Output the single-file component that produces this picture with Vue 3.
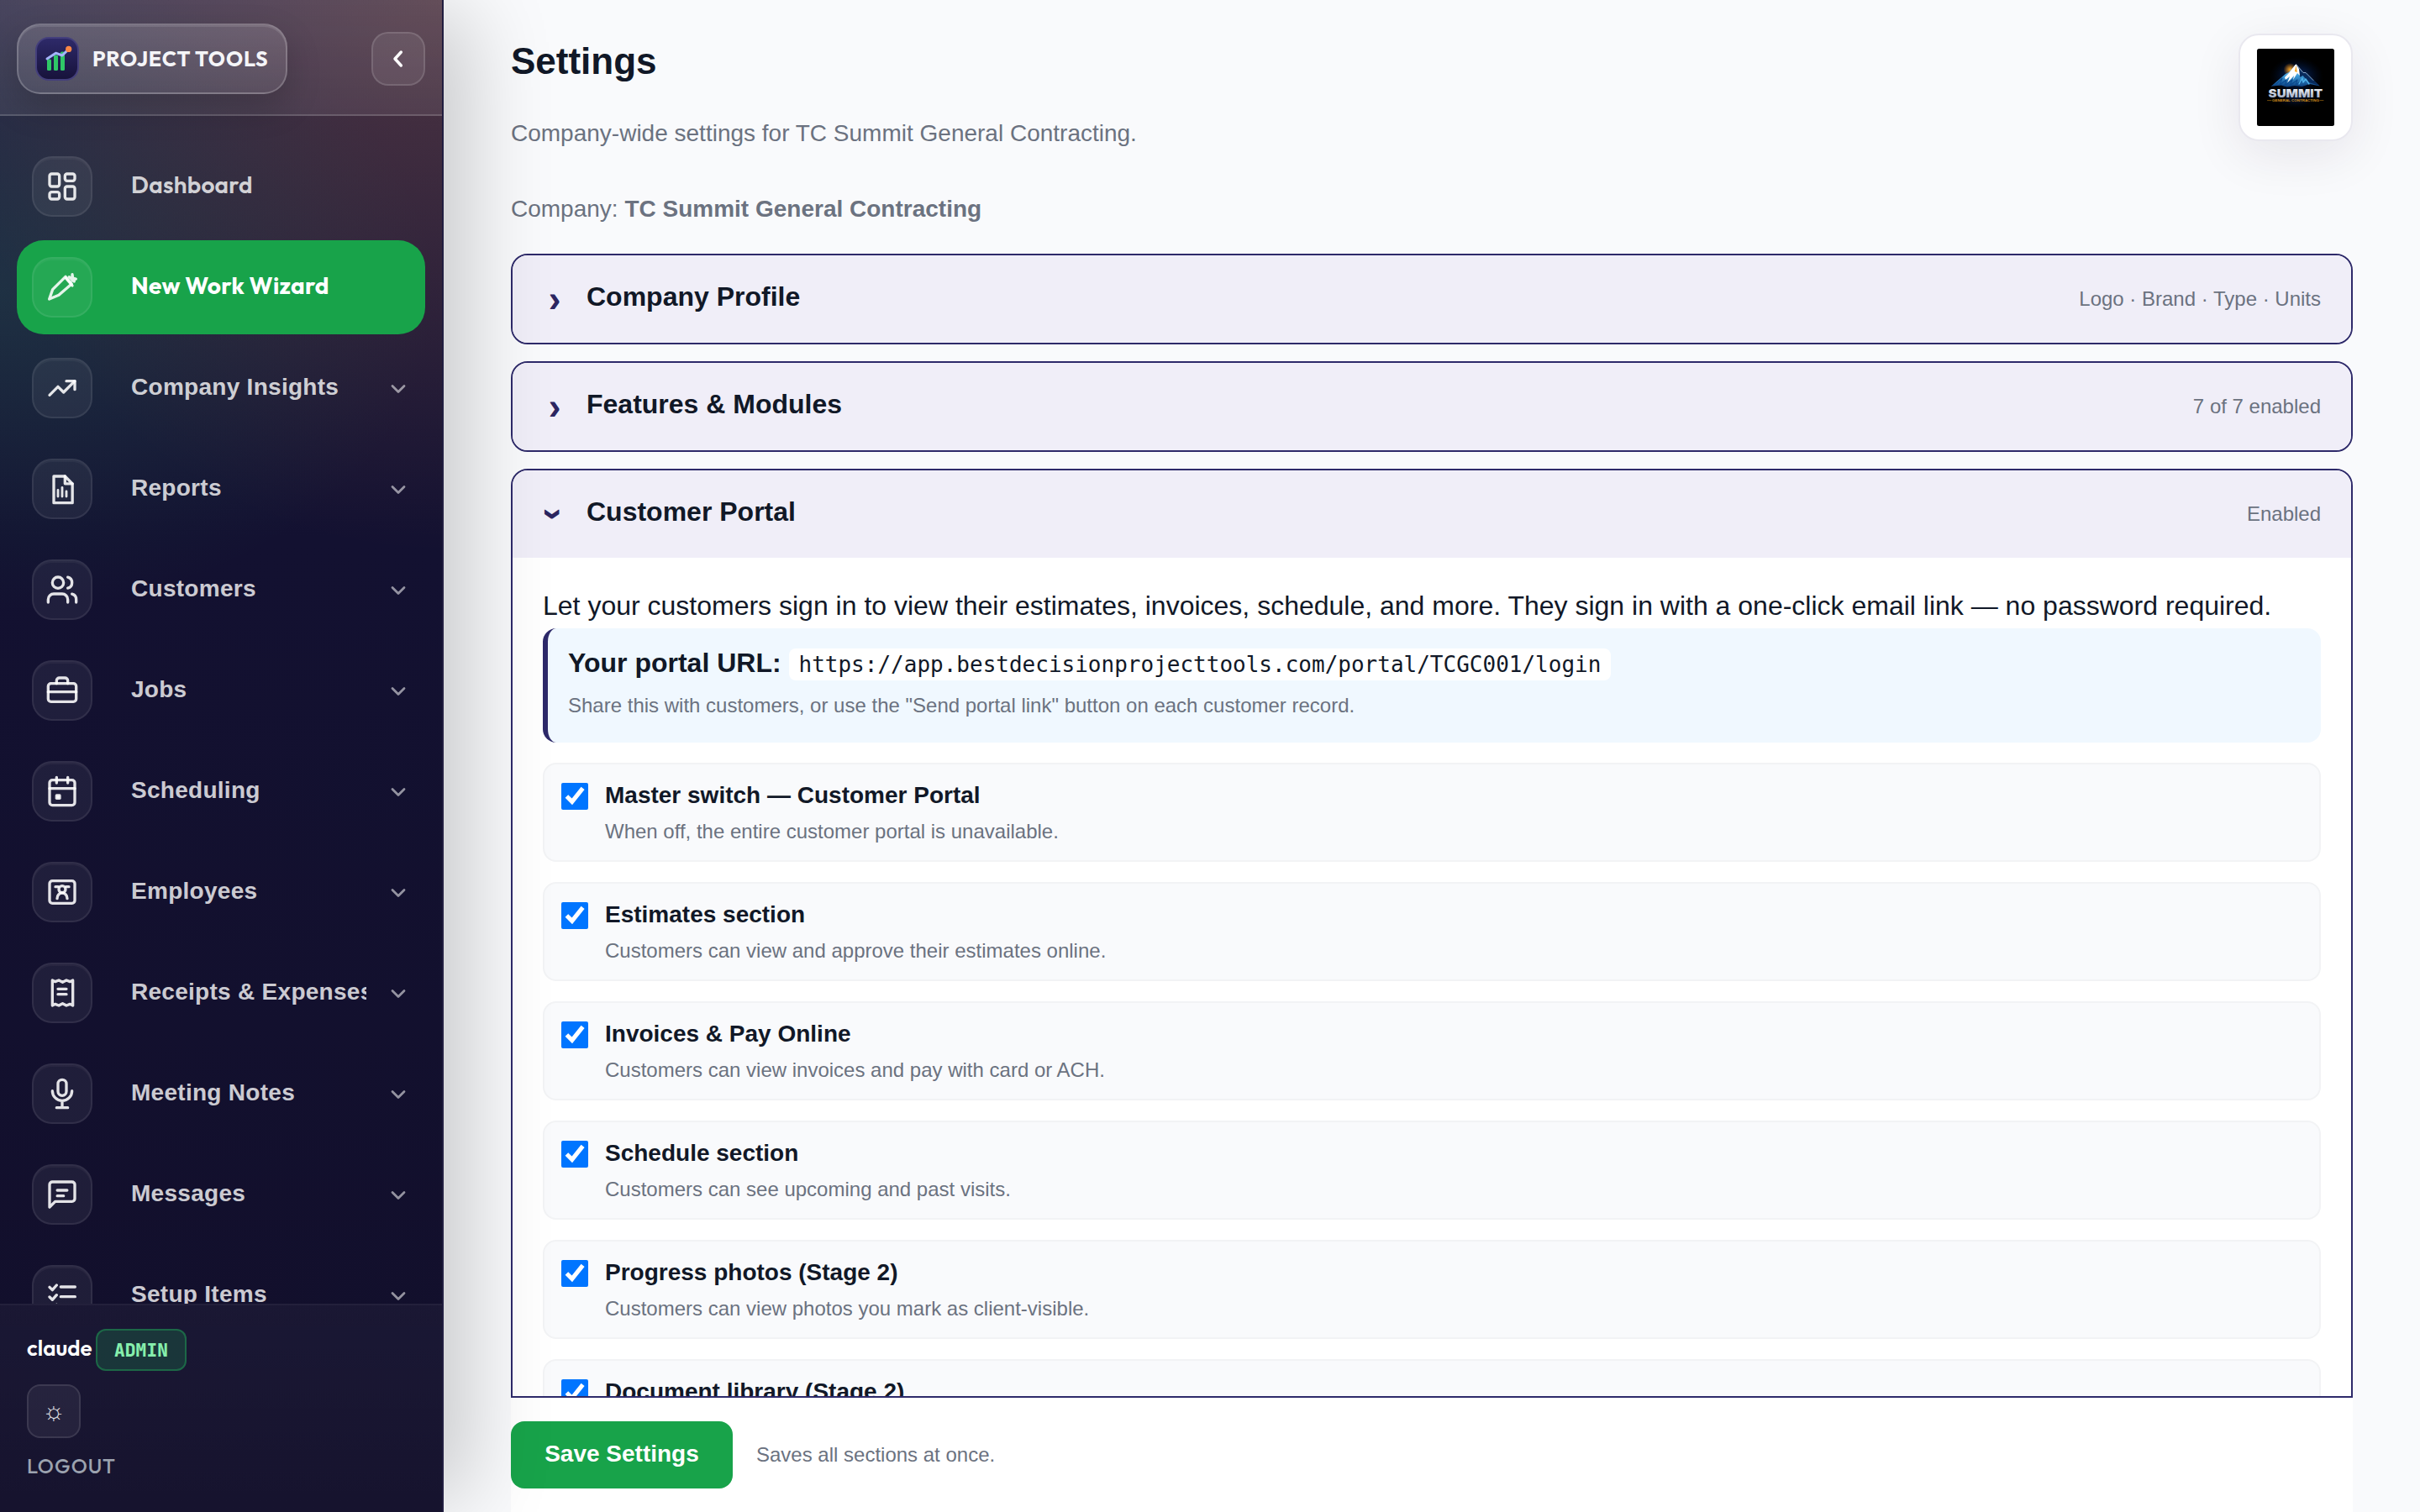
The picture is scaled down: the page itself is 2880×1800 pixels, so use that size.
<script setup>
import { ref } from "vue";

const navItems = [
	{
		label: "Dashboard",
		brand: true,
		icon: '<rect x="3" y="3" width="7" height="9" rx="1.5"/><rect x="14" y="3" width="7" height="5" rx="1.5"/><rect x="14" y="12" width="7" height="9" rx="1.5"/><rect x="3" y="16" width="7" height="5" rx="1.5"/>',
	},
	{
		label: "New Work Wizard",
		brand: true,
		active: true,
		icon: '<path d="M2.8 20.4 5.2 13.6 14.4 4.4l4.4 5.2-9.2 8-6.8 2.8z"/><path d="m14.6 5.4 4.6 5.4"/><path d="m17 4.6 3.6 3.2M19.2 2.8l.4 2.6 2.2.6-2.6 1.2z"/>',
	},
	{
		label: "Company Insights",
		icon: '<path d="m3 17 6-6 4 4 8-8"/><path d="M15 7h6v6"/>',
	},
	{
		label: "Reports",
		icon: '<path d="M6 3h8l5.3 5.3V22H6z"/><path d="M14 3v5.3h5.3"/><path d="M9 12.8v4.6M12 11v6.4M15 13.8v3.6" stroke-width="1.7"/>',
	},
	{
		label: "Customers",
		icon: '<path d="M16 21v-2a4 4 0 0 0-4-4H6a4 4 0 0 0-4 4v2"/><circle cx="9" cy="7" r="4"/><path d="M22 21v-2a4 4 0 0 0-3-3.87"/><path d="M16 3.13a4 4 0 0 1 0 7.75"/>',
	},
	{
		label: "Jobs",
		icon: '<rect x="2" y="7" width="20" height="13" rx="2"/><path d="M8 7V5a2 2 0 0 1 2-2h4a2 2 0 0 1 2 2v2"/><path d="M2 13h20"/>',
	},
	{
		label: "Scheduling",
		icon: '<rect x="3" y="4" width="18" height="18" rx="2"/><path d="M8 2v4M16 2v4M3 10h18"/><rect x="8" y="15" width="2.2" height="2" fill="currentColor"/>',
	},
	{
		label: "Employees",
		icon: '<rect x="3" y="4" width="18" height="16" rx="2"/><circle cx="12" cy="10" r="2.4"/><path d="M8.4 16.6c0-2.2 1.6-4 3.6-4s3.6 1.8 3.6 4"/><path d="M7.2 8.2h2M14.8 8.2h2"/>',
	},
	{
		label: "Receipts & Expenses",
		icon: '<path d="M5 3v18l2-1 2.6 1L12.3 19.6 15 21l2.6-1 2 1V3l-2 1L15 3l-2.7 1.4L9.6 3 7 4z"/><path d="M9 9.2h6M9 13h6"/>',
	},
	{
		label: "Meeting Notes",
		icon: '<rect x="9" y="2" width="6" height="11.4" rx="3"/><path d="M5 10a7 7 0 0 0 14 0M12 17v5M8 22h8"/>',
	},
	{
		label: "Messages",
		icon: '<path d="M21 15a2 2 0 0 1-2 2H7l-4 4V5a2 2 0 0 1 2-2h14a2 2 0 0 1 2 2z"/><path d="M8.5 9h7M8.5 13h4.5"/>',
	},
	{
		label: "Setup Items",
		icon: '<path d="m3 6.2 2 2 3-3.4M3 13.2l2 2 3-3.4M3 20.2l2 2 3-3.4"/><path d="M11 6h10.2M11 13h10.2M11 20h10.2"/>',
	},
];

const portalUrl = "https://app.bestdecisionprojecttools.com/portal/TCGC001/login";

const toggles = ref([
	{ title: "Master switch — Customer Portal", note: "When off, the entire customer portal is unavailable.", on: true },
	{ title: "Estimates section", note: "Customers can view and approve their estimates online.", on: true },
	{ title: "Invoices & Pay Online", note: "Customers can view invoices and pay with card or ACH.", on: true },
	{ title: "Schedule section", note: "Customers can see upcoming and past visits.", on: true },
	{ title: "Progress photos (Stage 2)", note: "Customers can view photos you mark as client-visible.", on: true },
	{ title: "Document library (Stage 2)", note: "", on: true },
]);
</script>

<template>
	<div class="app">
		<aside class="sidebar">
			<header class="sidebar-head">
				<div class="brand">
					<svg class="brand-icon" viewBox="0 0 52 52">
						<defs>
							<linearGradient id="brandBg" x1="0" y1="0" x2="0" y2="1">
								<stop offset="0" stop-color="#2e2a6a" />
								<stop offset="1" stop-color="#17123a" />
							</linearGradient>
						</defs>
						<rect x="1" y="1" width="50" height="50" rx="15" fill="url(#brandBg)" stroke="#443f7c" stroke-width="2" />
						<g fill="#2fc767">
							<rect x="14" y="26.5" width="5" height="13.5" rx="1.6" />
							<rect x="22" y="21.5" width="5" height="18.5" rx="1.6" />
							<rect x="30" y="17.5" width="5" height="22.5" rx="1.6" />
						</g>
						<path d="M14 26 24.4 19.2 32 22 39.6 14.6" fill="none" stroke="#a5b4fc" stroke-width="3" stroke-linecap="round" stroke-linejoin="round" />
						<circle cx="39.7" cy="14.4" r="3.6" fill="#fb8745" />
					</svg>
					<span class="brand-name">PROJECT TOOLS</span>
				</div>
				<button class="collapse" type="button">
					<svg viewBox="0 0 24 24"><path d="m14.5 6-5.5 6 5.5 6" /></svg>
				</button>
			</header>

			<nav class="nav">
				<a v-for="item in navItems" :key="item.label" class="nav-item" :class="{ active: item.active }">
					<span class="nav-icon">
						<svg viewBox="0 0 24 24" v-html="item.icon"></svg>
					</span>
					<span class="nav-label" :class="{ branded: item.brand }">{{ item.label }}</span>
					<svg v-if="!item.brand" class="chevron" viewBox="0 0 24 24"><path d="m6 9 6 6 6-6" /></svg>
				</a>
			</nav>

			<footer class="sidebar-foot">
				<div class="user">
					<span class="user-name">claude</span>
					<span class="role">ADMIN</span>
				</div>
				<button class="theme" type="button">☼</button>
				<a class="logout">LOGOUT</a>
			</footer>
		</aside>

		<main class="main">
			<div class="page-head">
				<div>
					<h1>Settings</h1>
					<p class="lead">Company-wide settings for TC Summit General Contracting.</p>
					<p class="lead company">Company: <strong>TC Summit General Contracting</strong></p>
				</div>
				<div class="logo-card">
					<svg viewBox="0 0 92 92">
						<defs>
							<radialGradient id="glow">
								<stop offset="0" stop-color="#0b3fa0" stop-opacity="0.9" />
								<stop offset="1" stop-color="#001030" stop-opacity="0" />
							</radialGradient>
							<radialGradient id="sun">
								<stop offset="0" stop-color="#ffb02e" />
								<stop offset="1" stop-color="#ff8a00" stop-opacity="0" />
							</radialGradient>
							<linearGradient id="rock" x1="0" y1="0" x2="0" y2="1">
								<stop offset="0" stop-color="#e8f4ff" />
								<stop offset="0.5" stop-color="#3f9fdc" />
								<stop offset="1" stop-color="#0a3c7c" />
							</linearGradient>
							<linearGradient id="steel" x1="0" y1="0" x2="0" y2="1">
								<stop offset="0" stop-color="#ffffff" />
								<stop offset="1" stop-color="#8d9cba" />
							</linearGradient>
						</defs>
						<rect width="92" height="92" rx="2.5" fill="#000" />
						<ellipse cx="47" cy="33" rx="32" ry="23" fill="url(#glow)" />
						<ellipse cx="46" cy="60" rx="26" ry="11" fill="url(#glow)" opacity="0.4" />
						<circle cx="39.5" cy="25" r="8" fill="url(#sun)" />
						<path d="M16.7 44.7 34 30l4-2 8.3-9.5L54 28l3.5 0 8 8 9.2 8.5-12-2.5-9 3-9-1-9 1.6-7-2z" fill="url(#rock)" />
						<path d="M46.5 18.7 54 28l3.5 0 8 8 9 8-13-4-7-8-3 2z" fill="#082a5c" />
						<path d="M46.3 18.5 38 29l-5 5 1 3 5-4-3 8 8-9-1 5 5-8 3 3-1-8z" fill="#fff" />
						<path d="m46.5 20 1.4 8-3-1z" fill="#f7a623" />
						<path d="m22 43 8-8-3 8 8-6-2 7 9-7-3 7 9-7-2 6 7-4" fill="none" stroke="#0b4a8e" stroke-width="1.1" />
						<path d="m50 42 4-7 1 5 3-4 4 6" fill="none" stroke="#4fb2ea" stroke-width="1.4" />
						<path d="m47 19 8 9.5 3 0 9 9" fill="none" stroke="#b7d3ee" stroke-width="0.7" />
						<text x="13.6" y="58.2" class="logo-title" textLength="64.5" lengthAdjust="spacingAndGlyphs">SUMMIT</text>
						<path d="M12.5 61.6h4.5M75 61.6h4" stroke="#b87a14" stroke-width="0.6" />
						<text x="18" y="63.2" class="logo-sub" textLength="56" lengthAdjust="spacingAndGlyphs">GENERAL CONTRACTING</text>
					</svg>
				</div>
			</div>

			<div class="sections">
				<section class="panel">
					<div class="panel-head">
						<span class="arrow">›</span>
						<h2>Company Profile</h2>
						<span class="meta">Logo · Brand · Type · Units</span>
					</div>
				</section>
				<section class="panel">
					<div class="panel-head">
						<span class="arrow">›</span>
						<h2>Features &amp; Modules</h2>
						<span class="meta">7 of 7 enabled</span>
					</div>
				</section>
				<section class="panel open">
					<div class="panel-head">
						<span class="arrow">›</span>
						<h2>Customer Portal</h2>
						<span class="meta">Enabled</span>
					</div>
					<div class="panel-body">
						<p class="intro">
							Let your customers sign in to view their estimates, invoices, schedule, and more. They sign in with a one-click email link — no password required.
						</p>
						<div class="url-box">
							<div class="url-row"><strong>Your portal URL:</strong> <code>{{ portalUrl }}</code></div>
							<div class="hint">Share this with customers, or use the "Send portal link" button on each customer record.</div>
						</div>
						<label v-for="toggle in toggles" :key="toggle.title" class="toggle">
							<input v-model="toggle.on" type="checkbox" />
							<span class="toggle-text">
								<strong>{{ toggle.title }}</strong>
								<span v-if="toggle.note">{{ toggle.note }}</span>
							</span>
						</label>
					</div>
				</section>
			</div>

			<div class="save-bar">
				<button class="save" type="button">Save Settings</button>
				<span class="save-note">Saves all sections at once.</span>
			</div>
		</main>
	</div>
</template>

<style>
body {
	margin: 0;
	background: #f9fafc;
}
</style>

<style scoped>
* {
	box-sizing: border-box;
}

.app {
	display: flex;
	height: 1800px;
	overflow: hidden;
	background: #f9fafc;
	color: #111827;
	font-family: "Liberation Sans", Arial, sans-serif;
	font-size: 32px;
}

h1,
h2,
p {
	margin: 0;
}

button {
	font-family: inherit;
	padding: 0;
}

/* Sidebar */
.sidebar {
	position: relative;
	z-index: 2;
	display: flex;
	flex-direction: column;
	flex: none;
	width: 528px;
	border-right: 2px solid #211e40;
	background:
		radial-gradient(ellipse 600px 660px at 100% 0, rgba(249, 115, 40, 0.17), rgba(249, 115, 40, 0) 100%),
		radial-gradient(ellipse 520px 380px at 0 350px, rgba(34, 170, 110, 0.15), rgba(34, 170, 110, 0) 100%),
		linear-gradient(180deg, #2b2848 0, #131131 640px, #120f2b 1800px);
	box-shadow: 44px 0 96px -16px rgba(0, 0, 0, 0.2);
}

.sidebar-head {
	display: flex;
	align-items: center;
	justify-content: space-between;
	flex: none;
	height: 138px;
	padding: 4px 20px 0;
	border-bottom: 2px solid rgba(255, 255, 255, 0.12);
	background: linear-gradient(180deg, rgba(255, 255, 255, 0.12), rgba(255, 255, 255, 0.08));
}

.brand {
	display: flex;
	align-items: center;
	gap: 16px;
	width: 322px;
	height: 84px;
	padding-left: 20px;
	border: 2px solid rgba(255, 255, 255, 0.2);
	border-radius: 28px;
	background: linear-gradient(180deg, rgba(255, 255, 255, 0.14), rgba(255, 255, 255, 0.08));
	box-shadow: 0 16px 40px rgba(0, 0, 0, 0.18), inset 0 2px 0 rgba(255, 255, 255, 0.1);
}

.brand-icon {
	width: 52px;
	height: 52px;
}

.brand-name {
	padding-bottom: 1px;
	color: #f5f5f8;
	font-family: "Outfit", "Lato", sans-serif;
	font-size: 25px;
	font-weight: 700;
	letter-spacing: 0.8px;
	white-space: nowrap;
}

.collapse {
	width: 64px;
	height: 64px;
	border: 2px solid rgba(255, 255, 255, 0.13);
	border-radius: 20px;
	background: rgba(255, 255, 255, 0.08);
}

.collapse svg {
	display: block;
	width: 32px;
	height: 32px;
	margin: auto;
}

svg path {
	stroke-linecap: round;
	stroke-linejoin: round;
}

.collapse path {
	fill: none;
	stroke: #fff;
	stroke-width: 2.6;
}

.nav {
	display: flex;
	flex-direction: column;
	flex: 1;
	gap: 8px;
	min-height: 0;
	padding: 28px 20px 0;
	overflow: hidden;
}

.nav-item {
	display: flex;
	align-items: center;
	flex: none;
	height: 112px;
	padding: 0 18px;
	border-radius: 32px;
	color: rgba(255, 255, 255, 0.8);
}

.nav-item.active {
	background: #18a34a;
	color: #fff;
}

.nav-icon {
	display: flex;
	align-items: center;
	justify-content: center;
	flex: none;
	width: 72px;
	height: 72px;
	margin-right: 46px;
	border: 2px solid rgba(255, 255, 255, 0.08);
	border-radius: 24px;
	background: rgba(255, 255, 255, 0.06);
	box-shadow: inset 0 2px 0 rgba(255, 255, 255, 0.04);
}

.nav-icon svg {
	width: 40px;
	height: 40px;
	color: rgba(255, 255, 255, 0.88);
	fill: none;
	stroke: currentColor;
	stroke-width: 2;
	stroke-linecap: round;
	stroke-linejoin: round;
}

.nav-label {
	flex: 1;
	overflow: hidden;
	padding-bottom: 3px;
	font-size: 28px;
	font-weight: 700;
	letter-spacing: 0.28px;
	white-space: nowrap;
}

.nav-label.branded {
	padding-bottom: 5px;
	font-family: "Outfit", "Lato", sans-serif;
	font-weight: 600;
}

.active .nav-label.branded {
	font-weight: 700;
}

.chevron {
	flex: none;
	width: 28px;
	height: 28px;
	margin: 2px 0 0 24px;
	fill: none;
	stroke: rgba(255, 255, 255, 0.55);
	stroke-width: 2.4;
}

.sidebar-foot {
	display: flex;
	flex-direction: column;
	align-items: flex-start;
	flex: none;
	height: 248px;
	padding: 28px 32px 0;
	border-top: 2px solid rgba(255, 255, 255, 0.06);
	background: linear-gradient(180deg, rgba(255, 255, 255, 0.035), rgba(255, 255, 255, 0.015));
}

.user {
	display: flex;
	align-items: center;
	height: 50px;
}

.user-name {
	width: 82px;
	padding-bottom: 5px;
	color: #fff;
	font-family: "Outfit", "Lato", sans-serif;
	font-size: 26px;
	font-weight: 600;
}

.role {
	display: flex;
	align-items: center;
	justify-content: center;
	width: 108px;
	height: 50px;
	border: 2px solid rgba(34, 197, 94, 0.35);
	border-radius: 12px;
	background: rgba(34, 197, 94, 0.18);
	color: #86efac;
	font-family: "JetBrains Mono", "DejaVu Sans Mono", monospace;
	font-size: 21px;
	font-weight: 800;
	letter-spacing: 0.2px;
}

.theme {
	width: 64px;
	height: 64px;
	margin-top: 16px;
	border: 2px solid rgba(255, 255, 255, 0.1);
	border-radius: 16px;
	background: rgba(255, 255, 255, 0.06);
	color: #e5e7eb;
	font-family: "Liberation Sans", sans-serif;
	font-size: 30px;
}

.logout {
	margin-top: 18px;
	color: #9ca3af;
	font-family: "Outfit", "Lato", sans-serif;
	font-size: 24px;
	font-weight: 500;
	letter-spacing: 0.96px;
}

/* Main */
.main {
	display: flex;
	flex-direction: column;
	flex: 1;
	min-width: 0;
	padding: 0 80px;
}

.page-head {
	display: flex;
	justify-content: space-between;
	flex: none;
	height: 302px;
	padding-top: 40px;
}

h1 {
	padding-top: 8px;
	font-size: 44px;
	line-height: 50px;
}

.lead {
	margin-top: 45px;
	color: #6b7280;
	font-size: 28px;
	line-height: 32px;
}

.company {
	margin-top: 58px;
}

.logo-card {
	width: 136px;
	height: 128px;
	padding: 16px 20px;
	border: 2px solid #e9e8ef;
	border-radius: 24px;
	background: #fff;
	box-shadow: 0 16px 60px rgba(40, 20, 60, 0.09);
}

.logo-card svg {
	display: block;
	width: 92px;
	height: 92px;
}

.logo-title {
	fill: url(#steel);
	font-family: "Inter", "Liberation Sans", sans-serif;
	font-size: 13.8px;
	font-weight: 900;
}

.logo-sub {
	fill: #d28f1c;
	font-size: 4.2px;
	font-weight: 700;
}

.sections {
	display: flex;
	flex-direction: column;
	flex: 1;
	gap: 20px;
	min-height: 0;
	overflow: hidden;
}

.panel {
	flex: none;
	overflow: hidden;
	border: 2px solid #2e2a6a;
	border-radius: 20px;
	background: #fff;
}

.panel-head {
	display: flex;
	align-items: center;
	height: 104px;
	padding: 0 36px;
	background: #f0eef8;
}

.arrow {
	display: flex;
	align-items: center;
	justify-content: center;
	width: 28px;
	height: 44px;
	margin-right: 24px;
	color: #2b2560;
	font-size: 44px;
	font-weight: 700;
	line-height: 44px;
}

.open .arrow {
	transform: rotate(90deg);
}

h2 {
	flex: 1;
	padding-bottom: 6px;
	font-size: 32px;
	line-height: 36px;
}

.meta {
	color: #6b7280;
	font-size: 24px;
}

.panel-body {
	padding: 35px 36px 36px;
}

.intro {
	line-height: 44px;
	white-space: nowrap;
}

.url-box {
	height: 136px;
	margin-top: 5px;
	padding: 23px 24px 0;
	border-left: 6px solid #2e2a6a;
	border-radius: 16px;
	background: #f0f8ff;
}

.url-row {
	height: 36px;
	line-height: 36px;
	white-space: nowrap;
}

code {
	padding: 4px 12px;
	border-radius: 8px;
	background: #fff;
	font-family: "DejaVu Sans Mono", monospace;
	font-size: 26px;
}

.hint {
	margin-top: 19px;
	color: #6b7280;
	font-size: 24px;
	line-height: 28px;
}

.toggle {
	display: flex;
	align-items: flex-start;
	height: 118px;
	margin-top: 24px;
	padding: 22px 20px 0;
	border: 2px solid #f2f3f5;
	border-radius: 16px;
	background: #f9fafc;
}

.toggle input {
	width: 32px;
	height: 32px;
	margin: 0 20px 0 0;
}

.toggle-text {
	display: flex;
	flex-direction: column;
	gap: 14px;
}

.toggle-text strong {
	font-size: 28px;
	line-height: 30px;
}

.toggle-text span {
	color: #6b7280;
	font-size: 24px;
	line-height: 28px;
}

.save-bar {
	display: flex;
	align-items: center;
	flex: none;
	gap: 28px;
	height: 138px;
	border-top: 2px solid #2e2a6a;
	background: #fff;
}

.save {
	width: 264px;
	height: 80px;
	padding-bottom: 2px;
	border: 0;
	border-radius: 16px;
	background: #18a34a;
	color: #fff;
	font-size: 28px;
	font-weight: 700;
}

.save-note {
	color: #6b7280;
	font-size: 24px;
}
</style>
